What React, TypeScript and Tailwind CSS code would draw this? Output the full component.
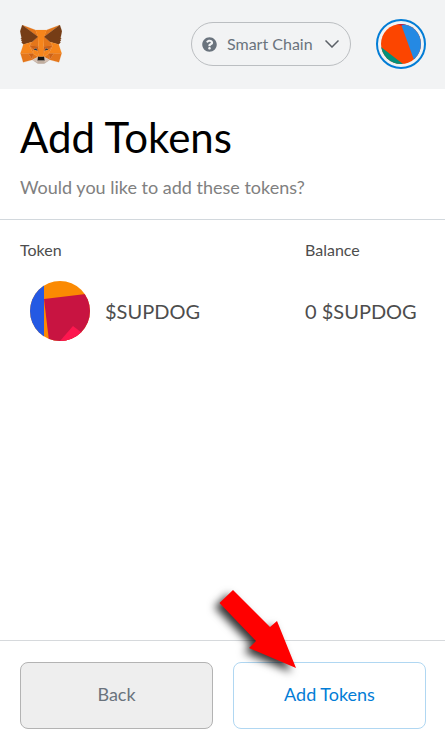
const foxFacets: [string, string][] = [
  ['#e2761b', '274.1,35.5 174.6,109.4 193,65.8'],
  ['#e4761b', '44.4,35.5 143.1,110.1 125.6,65.8'],
  ['#e4761b', '238.3,206.8 211.8,247.4 268.5,263 284.8,207.7'],
  ['#e4761b', '33.9,207.7 50.1,263 106.8,247.4 80.3,206.8'],
  ['#e4761b', '103.6,138.2 87.8,162.1 144.1,164.6 142.1,104.1'],
  ['#e4761b', '214.9,138.2 175.9,103.4 174.6,164.6 230.8,162.1'],
  ['#e4761b', '106.8,247.4 140.6,230.9 111.4,208.1'],
  ['#e4761b', '177.9,230.9 211.8,247.4 207.1,208.1'],
  ['#d7c1b3', '211.8,247.4 177.9,230.9 180.6,253 180.3,262.3'],
  ['#d7c1b3', '106.8,247.4 138.3,262.3 138.1,253 140.6,230.9'],
  ['#233447', '138.8,193.5 110.6,185.2 130.5,176.1'],
  ['#233447', '179.7,193.5 188,176.1 208,185.2'],
  ['#cd6116', '106.8,247.4 111.6,206.8 80.3,207.7'],
  ['#cd6116', '207,206.8 211.8,247.4 238.3,207.7'],
  ['#cd6116', '230.8,162.1 174.6,164.6 179.8,193.5 188.1,176.1 208.1,185.2'],
  ['#cd6116', '110.6,185.2 130.6,176.1 138.8,193.5 144.1,164.6 87.8,162.1'],
  ['#e4751f', '87.8,162.1 111.4,208.1 110.6,185.2'],
  ['#e4751f', '208.1,185.2 207.1,208.1 230.8,162.1'],
  ['#e4751f', '144.1,164.6 138.8,193.5 145.4,227.6 146.9,182.7'],
  ['#e4751f', '174.6,164.6 171.9,182.6 173.1,227.6 179.8,193.5'],
  ['#f6851b', '179.8,193.5 173.1,227.6 177.9,230.9 207.1,208.1 208.1,185.2'],
  ['#f6851b', '110.6,185.2 111.4,208.1 140.6,230.9 145.4,227.6 138.8,193.5'],
  ['#c0ad9e', '180.3,262.3 180.6,253 178.1,250.8 140.4,250.8 138.1,253 138.3,262.3 106.8,247.4 117.8,256.4 140.1,271.9 178.4,271.9 200.8,256.4 211.8,247.4'],
  ['#161616', '177.9,230.9 173.1,227.6 145.4,227.6 140.6,230.9 138.1,253 140.4,250.8 178.1,250.8 180.6,253'],
  ['#763d16', '278.3,114.2 286.8,73.4 274.1,35.5 177.9,106.9 214.9,138.2 267.2,153.5 278.8,140 273.8,136.4 281.8,129.1 275.6,124.3 283.6,118.2'],
  ['#763d16', '31.8,73.4 40.3,114.2 34.9,118.2 42.9,124.3 36.8,129.1 44.8,136.4 39.8,140 51.3,153.5 103.6,138.2 140.6,106.9 44.4,35.5'],
  ['#f6851b', '267.2,153.5 214.9,138.2 230.8,162.1 207.1,208.1 238.3,207.7 284.8,207.7'],
  ['#f6851b', '103.6,138.2 51.3,153.5 33.9,207.7 80.3,207.7 111.4,208.1 87.8,162.1'],
  ['#f6851b', '174.6,164.6 177.9,106.9 193.1,65.8 125.6,65.8 140.6,106.9 144.1,164.6 145.3,182.8 145.4,227.6 173.1,227.6 173.3,182.8'],
];

function FoxLogo() {
  return (
    <svg viewBox="31 35 256 238" className="h-[39px] w-[42px]" aria-hidden="true">
      {foxFacets.map(([fill, points]) => (
        <polygon key={points} fill={fill} stroke={fill} strokeLinejoin="round" points={points} />
      ))}
    </svg>
  );
}

function AccountIcon() {
  return (
    <svg viewBox="0 0 40 40" className="size-10 rounded-full" aria-hidden="true">
      <rect width="40" height="40" fill="#fc4500" />
      <path d="M20 0 L33 36 L40 40 V0 Z" fill="#2589e3" />
      <path d="M14 0 H26 L20 1.500 Z" fill="#c8143c" />
      <path d="M0 23 L22 40 H0 Z" fill="#03907a" />
    </svg>
  );
}

function TokenIcon() {
  return (
    <svg viewBox="0 0 60 60" className="size-[60px] rounded-full" aria-hidden="true">
      <rect width="60" height="60" fill="#fb8a03" />
      <rect width="14" height="60" fill="#2459e3" />
      <path d="M14 18 L60 12.500 V60 H19 Z" fill="#c81441" />
      <path d="M30 60 L43 45 L60 58 V60 Z" fill="#fd174f" />
    </svg>
  );
}

function HelpIcon() {
  return (
    <svg viewBox="0 0 512 512" className="size-[15px] fill-[#6a737d]" aria-hidden="true">
      <path d="M504 256c0 137-111 248-248 248S8 393 8 256 119 8 256 8s248 111 248 248zM262.700 90c-54.500 0-89.300 23-116.500 63.800-3.500 5.300-2.400 12.400 2.700 16.300l34.700 26.300c5.200 3.900 12.600 3 16.700-2.100 17.900-22.700 30.100-35.800 57.300-35.800 20.400 0 45.700 13.100 45.700 33 0 15-12.400 22.700-32.500 34C247.100 238.500 216 254.900 216 296v4c0 6.600 5.400 12 12 12h56c6.600 0 12-5.400 12-12v-1.300c0-28.500 83.200-29.600 83.200-106.700 0-58-60.200-102-116.500-102zM256 338c-25.400 0-46 20.600-46 46s20.600 46 46 46 46-20.600 46-46-20.600-46-46-46z" />
    </svg>
  );
}

export default function App() {
  return (
    <div className="flex min-h-screen flex-col bg-white font-[Lato,'Open_Sans',sans-serif] text-[#4d4d4d]">
      <header className="flex items-center justify-between bg-[#f2f3f4] pt-[19px] pr-[19px] pb-5 pl-5">
        <FoxLogo />
        <div className="flex items-center gap-[25px]">
          <button
            type="button"
            className="flex h-11 w-40 items-center justify-between rounded-full border border-[#bbbec1] pr-[11px] pl-2.5 text-base text-[#6a737d]"
          >
            <span className="flex items-center gap-2.5">
              <HelpIcon />
              Smart Chain
            </span>
            <svg viewBox="0 0 14 8" className="h-2 w-3.5 fill-none stroke-[#5b6067] stroke-[1.5]" aria-hidden="true">
              <path d="M0.500 0.500 L7 7 L13.500 0.500" />
            </svg>
          </button>
          <button
            type="button"
            aria-label="Account"
            className="flex size-[50px] items-center justify-center rounded-full border-2 border-[#037dd6]"
          >
            <AccountIcon />
          </button>
        </div>
      </header>

      <section className="border-b border-[#d2d8dd] px-5 pt-6 pb-5">
        <h1 className="text-[42px] leading-12 text-black">Add Tokens</h1>
        <p className="mt-3.5 text-lg leading-6 text-[#808080]">Would you like to add these tokens?</p>
      </section>

      <main className="flex-1 px-5 pt-[18px]">
        <table className="w-full table-fixed text-left">
          <thead>
            <tr className="text-base leading-6">
              <th scope="col" className="font-normal">Token</th>
              <th scope="col" className="w-[120px] font-normal">Balance</th>
            </tr>
          </thead>
          <tbody>
            <tr className="text-xl">
              <td className="pt-[19px]">
                <div className="flex items-center gap-[15px] pl-2.5">
                  <TokenIcon />
                  $SUPDOG
                </div>
              </td>
              <td className="pt-[19px] whitespace-nowrap">0 $SUPDOG</td>
            </tr>
          </tbody>
        </table>
      </main>

      <footer className="relative flex gap-5 border-t border-[#d6d9dc] pt-[21px] pr-[19px] pb-5 pl-5 text-lg">
        <button type="button" className="h-[67px] flex-1 rounded-lg border border-[#b3b3b3] bg-[#eeeeee] pb-1 text-[#6a737d]">
          Back
        </button>
        <button type="button" className="h-[67px] flex-1 rounded-lg border border-[#b0d7f2] bg-white pb-1 text-[#037dd6]">
          Add Tokens
        </button>
        <svg
          viewBox="0 0 100 100"
          className="pointer-events-none absolute -top-[60px] left-1/2 -ml-[22px] size-[100px] drop-shadow-[-5px_4px_4px_rgba(0,0,0,0.8)]"
          aria-hidden="true"
        >
          <path d="M32 9 L69 46 L76 40 L95 87 L48 67 L55 60 L18.500 22 Z" fill="#ff0000" />
        </svg>
      </footer>
    </div>
  );
}
